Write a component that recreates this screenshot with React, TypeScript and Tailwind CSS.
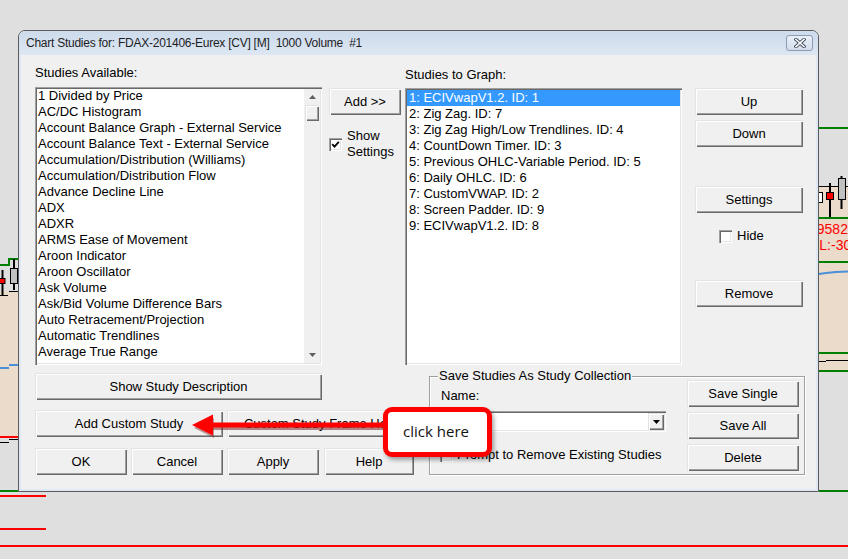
import React from "react";

const available = [
  "1 Divided by Price",
  "AC/DC Histogram",
  "Account Balance Graph - External Service",
  "Account Balance Text - External Service",
  "Accumulation/Distribution (Williams)",
  "Accumulation/Distribution Flow",
  "Advance Decline Line",
  "ADX",
  "ADXR",
  "ARMS Ease of Movement",
  "Aroon Indicator",
  "Aroon Oscillator",
  "Ask Volume",
  "Ask/Bid Volume Difference Bars",
  "Auto Retracement/Projection",
  "Automatic Trendlines",
  "Average True Range",
  "Awesome Oscillator",
];

const graphed = [
  "1: ECIVwapV1.2. ID: 1",
  "2: Zig Zag. ID: 7",
  "3: Zig Zag High/Low Trendlines. ID: 4",
  "4: CountDown Timer. ID: 3",
  "5: Previous OHLC-Variable Period. ID: 5",
  "6: Daily OHLC. ID: 6",
  "7: CustomVWAP. ID: 2",
  "8: Screen Padder. ID: 9",
  "9: ECIVwapV1.2. ID: 8",
];

const raised =
  "bg-[#f0f0f0] shadow-[inset_1px_1px_0_#e3e3e3,inset_2px_2px_0_#ffffff,inset_-1px_-1px_0_#696969,inset_-2px_-2px_0_#a0a0a0]";
const sunken =
  "shadow-[inset_1px_1px_0_#a0a0a0,inset_2px_2px_0_#696969,inset_-1px_-1px_0_#ffffff,inset_-2px_-2px_0_#e3e3e3]";

function Btn({ children, className = "" }: { children: React.ReactNode; className?: string }) {
  return (
    <button
      className={`h-[27px] shrink-0 flex items-center justify-center text-[13px] leading-none text-black ${raised} ${className}`}
    >
      {children}
    </button>
  );
}

function Check({ checked = false }: { checked?: boolean }) {
  return (
    <span className={`w-[13px] h-[13px] shrink-0 bg-white flex items-center justify-center ${sunken}`}>
      {checked && (
        <svg width="9" height="9" viewBox="0 0 9 9">
          <path d="M1.2 4.2 L3.5 6.6 L7.8 1.8" stroke="#000" strokeWidth="1.8" fill="none" />
        </svg>
      )}
    </span>
  );
}

function ChartBackdrop() {
  return (
    <svg className="absolute inset-0" width="848" height="559" viewBox="0 0 848 559">
      {/* left edge of the chart */}
      <rect x="0" y="291" width="18" height="146" fill="#eadbcb" />
      <path d="M0 265 H9 V259 H18" stroke="#008000" strokeWidth="2" fill="none" />
      <line x1="2.5" y1="270" x2="2.5" y2="295" stroke="#000" strokeWidth="2" />
      <rect x="-1" y="278.5" width="6" height="5" fill="#ff0000" stroke="#000" />
      <line x1="0" y1="295.5" x2="8" y2="295.5" stroke="#000" />
      <line x1="14" y1="259" x2="14" y2="290" stroke="#000" strokeWidth="2" />
      <rect x="10.5" y="268.5" width="7" height="15" fill="#c0c0c0" stroke="#000" />
      <line x1="9" y1="291.5" x2="18" y2="291.5" stroke="#000" />
      <path d="M0 368 H9 M9 365 H18" stroke="#4a90d9" strokeWidth="2" />
      <line x1="0" y1="437" x2="18" y2="437" stroke="#ff0000" strokeWidth="2" />
      <path d="M0 442.5 H9 M9 439.5 H18" stroke="#000" />
      <line x1="0" y1="491" x2="18" y2="491" stroke="#008000" strokeWidth="2" />
      <line x1="0" y1="496" x2="46" y2="496" stroke="#ff0000" strokeWidth="2" />
      <line x1="0" y1="529" x2="46" y2="529" stroke="#ff0000" strokeWidth="2" />
      <line x1="0" y1="546" x2="848" y2="546" stroke="#ff0000" strokeWidth="2" />

      {/* right edge of the chart */}
      <rect x="819" y="186" width="29" height="186" fill="#eadbcb" />
      <line x1="819" y1="128" x2="848" y2="128" stroke="#008000" strokeWidth="2" />
      <line x1="819" y1="186.5" x2="848" y2="186.5" stroke="#000" />
      <rect x="817.5" y="192.5" width="5" height="10" fill="#fff" stroke="#000" />
      <line x1="830" y1="183" x2="830" y2="217" stroke="#000" strokeWidth="2" />
      <rect x="826.5" y="192.5" width="7" height="7" fill="#ff0000" stroke="#000" />
      <line x1="841.5" y1="176" x2="841.5" y2="209" stroke="#000" strokeWidth="2" />
      <rect x="838.5" y="178.5" width="7" height="21" fill="#c0c0c0" stroke="#000" />
      <line x1="819" y1="218" x2="848" y2="218" stroke="#008000" strokeWidth="2" />
      <text x="809" y="234" fontSize="14" fill="#ff0000" fontFamily="Liberation Sans, Arial, sans-serif">
        19582.5
      </text>
      <text x="810" y="250" fontSize="14" fill="#ff0000" fontFamily="Liberation Sans, Arial, sans-serif">
        PL:-30
      </text>
      <line x1="819" y1="262" x2="848" y2="262" stroke="#008000" strokeWidth="2" />
      <path d="M819 274 L826 273 L836 272 L848 271.5" stroke="#4a90d9" strokeWidth="2" fill="none" />
      <line x1="819" y1="353" x2="848" y2="353" stroke="#008000" strokeWidth="2" />
      <path d="M819 361.5 H826 M826 360.5 H848" stroke="#000" />
      <line x1="819" y1="371" x2="848" y2="371" stroke="#008000" strokeWidth="2" />
      <line x1="819" y1="491" x2="848" y2="491" stroke="#008000" strokeWidth="2" />
    </svg>
  );
}

function ListBox({
  items,
  selected,
  scroll,
  className = "",
}: {
  items: string[];
  selected?: number;
  scroll?: boolean;
  className?: string;
}) {
  return (
    <div className={`bg-white p-[2px] flex ${sunken} ${className}`}>
      <div className={`flex-1 overflow-hidden ${scroll ? "-mt-[1px]" : ""}`}>
        {items.map((t, i) => (
          <div
            key={t + i}
            className={`h-[16px] leading-[16px] whitespace-nowrap ${
              selected === i ? "bg-[#3399ff] text-white pl-[2px]" : scroll ? "pl-[1px]" : "pl-[2px]"
            }`}
          >
            {t}
          </div>
        ))}
      </div>
      {scroll && (
        <div className="w-[16px] bg-[#f0f0f0] flex flex-col items-center">
          <div className="h-[16px] flex items-center justify-center">
            <svg width="7" height="4" viewBox="0 0 7 4">
              <path d="M0 4 L3.5 0 L7 4 Z" fill="#606060" />
            </svg>
          </div>
          <div className={`w-[14px] h-[16px] ${raised}`} />
          <div className="flex-1" />
          <div className="h-[16px] flex items-center justify-center">
            <svg width="7" height="4" viewBox="0 0 7 4">
              <path d="M0 0 L3.5 4 L7 0 Z" fill="#606060" />
            </svg>
          </div>
        </div>
      )}
    </div>
  );
}

export default function App() {
  return (
    <div className="relative w-[848px] h-[559px] overflow-hidden bg-[#dfdfdf] font-['Liberation_Sans',Arial,sans-serif] text-[13px] text-black">
      <ChartBackdrop />

      {/* dialog window */}
      <div className="absolute left-[18px] top-[30px] w-[801px] h-[462px] rounded-t-[7px] border border-[#5a5a5a] bg-[#dfe8f3] flex flex-col overflow-hidden">
        <div className="h-[24px] shrink-0 flex items-center pl-[7px] pr-[5px] bg-[linear-gradient(#cddbeb,#dde7f3)]">
          <span className="flex-1 text-[12px] text-[#1e1e1e] tracking-[-0.25px] whitespace-pre">
            Chart Studies for: FDAX-201406-Eurex [CV] [M]  1000 Volume  #1
          </span>
          <span className="w-[27px] h-[16px] rounded-[3px] border border-[#8a9bb3] bg-[linear-gradient(#e9eff7,#d3deeb)] flex items-center justify-center">
            <svg width="12" height="10" viewBox="0 0 12 10">
              <path d="M2 1.5 L10 8.5 M10 1.5 L2 8.5" stroke="#3d4a5c" strokeWidth="3.4" strokeLinecap="square" />
              <path d="M2 1.5 L10 8.5 M10 1.5 L2 8.5" stroke="#ffffff" strokeWidth="1.6" strokeLinecap="square" />
            </svg>
          </span>
        </div>

        <div className="flex-1 mx-[2px] mb-[2px] bg-[#f0f0f0] flex flex-col pl-[14px]">
          {/* upper part: lists and their buttons */}
          <div className="h-[310px] flex items-start">
            <div className="w-[287px] flex flex-col">
              <div className="mt-[10px] leading-[16px]">Studies Available:</div>
              <ListBox items={available} scroll className="mt-[6px] h-[278px]" />
            </div>

            <div className="ml-[7px] w-[72px] pt-[33px] flex flex-col">
              <Btn className="w-[72px]">Add &gt;&gt;</Btn>
              <div className="mt-[13px] flex items-center">
                <Check checked />
                <div className="ml-[5px] leading-[16px]">
                  Show
                  <br />
                  Settings
                </div>
              </div>
            </div>

            <div className="ml-[4px] w-[277px] flex flex-col">
              <div className="mt-[12px] leading-[16px]">Studies to Graph:</div>
              <ListBox items={graphed} selected={0} className="mt-[5px] h-[277px]" />
            </div>

            <div className="ml-[13px] w-[108px] pt-[33px] flex flex-col">
              <Btn className="w-[108px]">Up</Btn>
              <Btn className="w-[108px] mt-[5px]">Down</Btn>
              <Btn className="w-[108px] mt-[39px]">Settings</Btn>
              <div className="mt-[15px] pl-[24px] h-[16px] flex items-center">
                <Check />
                <span className="ml-[5px]">Hide</span>
              </div>
              <Btn className="w-[108px] mt-[36px]">Remove</Btn>
            </div>
          </div>

          {/* lower part */}
          <div className="flex items-start">
            <div className="w-[379px] flex flex-col">
              <Btn className="mt-[8px] w-[287px]">Show Study Description</Btn>
              <div className="mt-[10px] flex">
                <Btn className="w-[188px]">Add Custom Study</Btn>
                <Btn className="ml-[4px] w-[187px]">Custom Study Frame Help</Btn>
              </div>
              <div className="mt-[11px] flex">
                <Btn className="w-[92px]">OK</Btn>
                <Btn className="ml-[4px] w-[92px]">Cancel</Btn>
                <Btn className="ml-[4px] w-[92px]">Apply</Btn>
                <Btn className="ml-[5px] w-[90px]">Help</Btn>
              </div>
            </div>

            <div className="relative ml-[15px] mt-[11px] w-[376px] h-[99px] border border-[#a0a0a0] shadow-[inset_1px_1px_0_#ffffff,1px_1px_0_#ffffff] flex">
              <span className="absolute left-[8px] -top-[9px] px-[1px] leading-[16px] bg-[#f0f0f0]">
                Save Studies As Study Collection
              </span>
              <div className="w-[225px] ml-[11px] pt-[11px] flex flex-col">
                <div className="leading-[16px]">Name:</div>
                <div className={`mt-[7px] h-[21px] bg-white p-[2px] flex justify-end ${sunken}`}>
                  <div className={`w-[16px] h-[17px] flex items-center justify-center ${raised}`}>
                    <svg width="7" height="4" viewBox="0 0 7 4">
                      <path d="M0 0 L3.5 4 L7 0 Z" fill="#000" />
                    </svg>
                  </div>
                </div>
                <div className="mt-[15px] h-[16px] -ml-[1px] flex items-center">
                  <Check />
                  <span className="ml-[4px]">Prompt to Remove Existing Studies</span>
                </div>
              </div>
              <div className="ml-[21px] pt-[3px] flex flex-col">
                <Btn className="w-[112px]">Save Single</Btn>
                <Btn className="w-[112px] mt-[5px]">Save All</Btn>
                <Btn className="w-[112px] mt-[5px]">Delete</Btn>
              </div>
            </div>
          </div>
        </div>
      </div>

      {/* annotation arrow */}
      <svg className="absolute left-0 top-0" width="848" height="559" viewBox="0 0 848 559">
        <path d="M213 427.5 L386 427.5" stroke="#7a2a2a" strokeOpacity="0.55" strokeWidth="5" />
        <path d="M194 428 L214 418 L214 438 Z" fill="#7a2a2a" fillOpacity="0.45" />
        <path d="M210 425 L386 425" stroke="#ff0000" strokeWidth="5" />
        <path d="M192 425 L213 414.5 L213 435.5 Z" fill="#ff0000" />
      </svg>

      {/* callout */}
      <div className="absolute left-[383px] top-[407px] w-[109px] h-[50px] rounded-[9px] border-[5px] border-[#ff0000] bg-white shadow-[2px_3px_4px_rgba(0,0,0,0.35)] flex items-center justify-center">
        <span className="font-['Open_Sans',sans-serif] text-[15px] text-[#111] leading-none -mt-[2px] -ml-[3px]">
          click here
        </span>
      </div>
    </div>
  );
}
